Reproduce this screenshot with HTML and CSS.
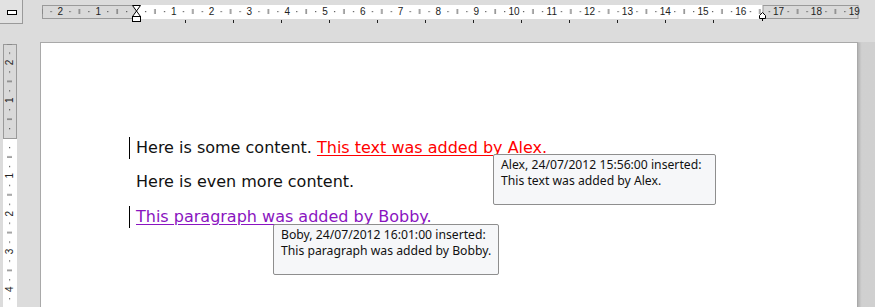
FILE: index.html
```html
<!DOCTYPE html>
<html>
<head>
<meta charset="utf-8">
<link rel="stylesheet" href="styles.css">
</head>
<body>
<div class="app">
  <div class="corner">
    <div class="tabsel"><span class="tabicon"></span></div>
  </div>
  <div class="hruler">
    <svg class="hsvg" width="835" height="42" viewBox="40 0 835 42">
      <defs>
        <pattern id="hticks" x="136" y="0" width="37.8" height="42" patternUnits="userSpaceOnUse">
          <rect x="9" y="11" width="1.2" height="1.2" fill="#555"/>
          <rect x="18.4" y="9" width="1.2" height="5" fill="#6a6a6a"/>
          <rect x="27.9" y="11" width="1.2" height="1.2" fill="#555"/>
        </pattern>
        <pattern id="tabmarks" x="185" y="0" width="48" height="42" patternUnits="userSpaceOnUse">
          <rect x="0" y="20" width="1" height="3" fill="#222"/>
        </pattern>
      </defs>
      <rect x="42.5" y="5.5" width="94" height="13" fill="#d9d9d9" stroke="#9a9a9a"/>
      <rect x="136" y="5" width="627" height="14" fill="#ffffff"/>
      <rect x="763" y="5.5" width="95" height="13" fill="#d9d9d9" stroke="#9a9a9a"/>
      <rect x="42" y="5" width="816" height="14" fill="url(#hticks)"/>
      <rect x="184" y="19" width="531" height="5" fill="url(#tabmarks)"/>
      <g class="rnum">
        <text x="60.4" y="15">2</text>
        <text x="98.2" y="15">1</text>
        <text x="173.8" y="15">1</text>
        <text x="211.6" y="15">2</text>
        <text x="249.4" y="15">3</text>
        <text x="287.2" y="15">4</text>
        <text x="325" y="15">5</text>
        <text x="362.8" y="15">6</text>
        <text x="400.6" y="15">7</text>
        <text x="438.4" y="15">8</text>
        <text x="476.2" y="15">9</text>
        <text x="514" y="15">10</text>
        <text x="551.8" y="15">11</text>
        <text x="589.6" y="15">12</text>
        <text x="627.4" y="15">13</text>
        <text x="665.2" y="15">14</text>
        <text x="703" y="15">15</text>
        <text x="740.8" y="15">16</text>
        <text x="778.6" y="15">17</text>
        <text x="816.4" y="15">18</text>
        <text x="854.2" y="15">19</text>
      </g>
      <g fill="#ffffff" stroke="#000" stroke-width="1">
        <polygon points="132.5,5.5 140.5,5.5 136.5,11"/>
        <polygon points="136.5,11 132.5,16.5 140.5,16.5"/>
        <rect x="132.5" y="16.5" width="8" height="5"/>
        <polygon points="759.5,18.5 759.5,15.5 762.5,12.5 765.5,15.5 765.5,18.5"/>
        <line x1="762.5" y1="18.5" x2="762.5" y2="21"/>
      </g>
    </svg>
  </div>
  <div class="vruler">
    <svg class="vsvg" width="40" height="265" viewBox="0 42 40 265">
      <defs>
        <pattern id="vticks" x="0" y="138" width="40" height="37.8" patternUnits="userSpaceOnUse">
          <rect x="9" y="9" width="1.2" height="1.2" fill="#555"/>
          <rect x="7" y="18.4" width="5" height="1.2" fill="#6a6a6a"/>
          <rect x="9" y="27.9" width="1.2" height="1.2" fill="#555"/>
        </pattern>
      </defs>
      <rect x="3.5" y="44.5" width="13" height="94" fill="#d9d9d9" stroke="#9a9a9a"/>
      <rect x="3" y="139" width="14" height="170" fill="#ffffff"/>
      <rect x="3" y="44" width="14" height="265" fill="url(#vticks)"/>
      <g class="rnum">
        <text x="9.5" y="66" transform="rotate(-90 9.5 62.4)">2</text>
        <text x="9.5" y="103.7" transform="rotate(-90 9.5 100.2)">1</text>
        <text x="9.5" y="179.3" transform="rotate(-90 9.5 175.8)">1</text>
        <text x="9.5" y="217.1" transform="rotate(-90 9.5 213.6)">2</text>
        <text x="9.5" y="254.9" transform="rotate(-90 9.5 251.4)">3</text>
        <text x="9.5" y="292.7" transform="rotate(-90 9.5 289.2)">4</text>
      </g>
    </svg>
  </div>
  <div class="canvas">
    <div class="page">
      <p class="para changed">Here is some content. <span class="ins ins-alex">This text was added by Alex.</span></p>
      <p class="para">Here is even more content.</p>
      <p class="para changed"><span class="ins ins-bobby">This paragraph was added by Bobby.</span></p>
      <div class="tip tip-alex">
        <div class="tip-line">Alex, 24/07/2012 15:56:00 inserted:</div>
        <div class="tip-line">This text was added by Alex.</div>
      </div>
      <div class="tip tip-bobby">
        <div class="tip-line">Boby, 24/07/2012 16:01:00 inserted:</div>
        <div class="tip-line">This paragraph was added by Bobby.</div>
      </div>
    </div>
  </div>
</div>
</body>
</html>
```

FILE: styles.css
```css
html, body {
  margin: 0;
  padding: 0;
  background: #dcdcdc;
}

.app {
  display: grid;
  grid-template-columns: 40px 835px;
  grid-template-rows: 42px 265px;
  width: 875px;
  height: 307px;
  overflow: hidden;
  background: #dcdcdc;
}

.corner {
  display: flex;
  align-items: flex-start;
}

.tabsel {
  box-sizing: border-box;
  width: 23px;
  height: 24px;
  padding-left: 1px;
  padding-top: 1px;
  border: 1px solid #9a9a9a;
  border-top: none;
  border-left: none;
  background: #e2e2e2;
  display: flex;
  align-items: center;
  justify-content: center;
}

.tabicon {
  display: block;
  width: 8px;
  height: 3px;
  border: 1px solid #000;
  background: #fff;
}

.hruler, .vruler {
  line-height: 0;
}

.hsvg, .vsvg {
  display: block;
}

.rnum text {
  font-family: "Liberation Sans", Arial, sans-serif;
  font-size: 10px;
  fill: #222;
  text-anchor: middle;
}

.canvas {
  background: linear-gradient(to right, #d6d6d6, #d0d0d0);
  padding-right: 17px;
  overflow: hidden;
}

.page {
  position: relative;
  height: 400px;
  background: #ffffff;
  border: 1px solid #a9a9a9;
  box-shadow: -1px -1px 2px rgba(0, 0, 0, 0.12), 2px 0 2px rgba(0, 0, 0, 0.12);
  padding: 94px 0 0 95px;
  box-sizing: border-box;
  font-family: "DejaVu Sans", Verdana, sans-serif;
  font-size: 16px;
  color: #111;
}

.para {
  margin: 0 0 12.4px 0;
  line-height: 22px;
  white-space: nowrap;
}

.changed {
  border-left: 1px solid #000;
  padding-left: 6px;
  margin-left: -7px;
}

.ins {
  text-decoration: underline;
  text-underline-offset: 2px;
}

.ins-alex {
  color: #ff0000;
}

.ins-bobby {
  color: #8a14c0;
}

.tip {
  position: absolute;
  box-sizing: border-box;
  height: 51px;
  padding: 2px 7px;
  background: #f6f7f9;
  border: 1px solid #8e8e8e;
  border-radius: 2px;
  font-family: "Noto Sans", "DejaVu Sans", sans-serif;
  font-size: 12.2px;
  line-height: 16px;
  color: #111;
  white-space: nowrap;
}

.tip-alex {
  left: 452px;
  top: 111px;
  width: 223px;
}

.tip-bobby {
  left: 232px;
  top: 181px;
  width: 226px;
}
```
